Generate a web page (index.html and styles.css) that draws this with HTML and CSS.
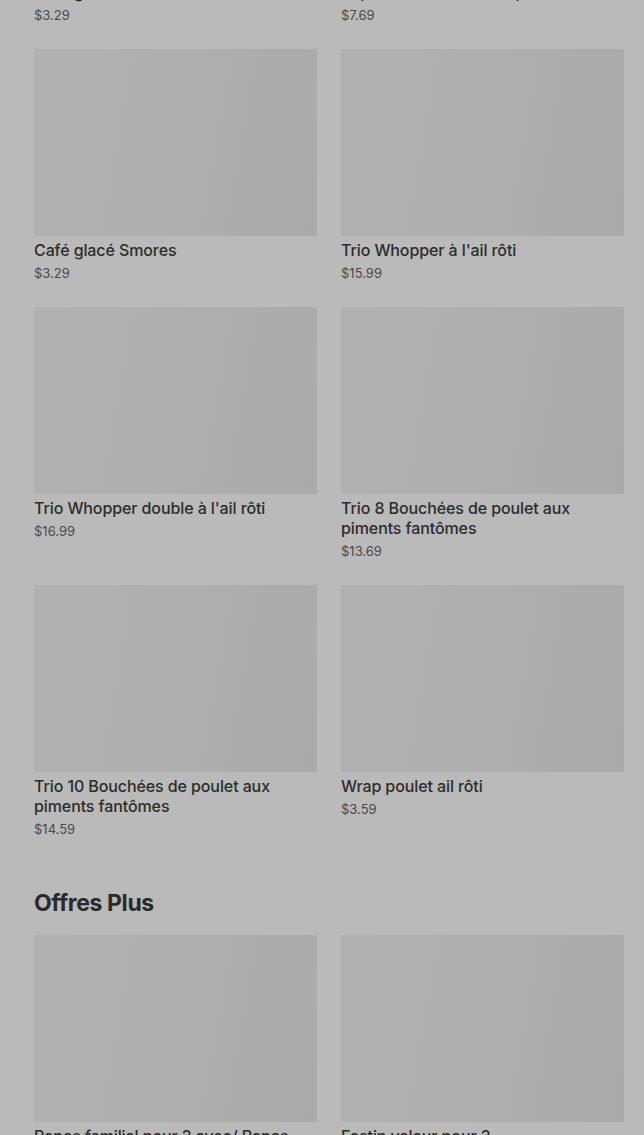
FILE: index.html
```html
<!DOCTYPE html>
<html lang="fr">
<head>
<meta charset="utf-8">
<link rel="stylesheet" href="styles.css">
</head>
<body>
<main class="page">
  <section class="section">
    <div class="grid">
      <div class="card"><div class="thumb"></div><div class="title">Café glacé Mocha</div><div class="price">$3.29</div></div>
      <div class="card"><div class="thumb"></div><div class="title">Repas 10 Bouchées de poulet</div><div class="price">$7.69</div></div>
      <div class="card"><div class="thumb"></div><div class="title">Café glacé Smores</div><div class="price">$3.29</div></div>
      <div class="card"><div class="thumb"></div><div class="title">Trio Whopper à l'ail rôti</div><div class="price">$15.99</div></div>
      <div class="card"><div class="thumb"></div><div class="title">Trio Whopper double à l'ail rôti</div><div class="price">$16.99</div></div>
      <div class="card"><div class="thumb"></div><div class="title">Trio 8 Bouchées de poulet aux piments fantômes</div><div class="price">$13.69</div></div>
      <div class="card"><div class="thumb"></div><div class="title">Trio 10 Bouchées de poulet aux piments fantômes</div><div class="price">$14.59</div></div>
      <div class="card"><div class="thumb"></div><div class="title">Wrap poulet ail rôti</div><div class="price">$3.59</div></div>
    </div>
  </section>
  <section class="section">
    <h2 class="heading">Offres Plus</h2>
    <div class="grid">
      <div class="card"><div class="thumb"></div><div class="title">Repas familial pour 2 avec/ Repas familial</div><div class="price">$24.99</div></div>
      <div class="card"><div class="thumb"></div><div class="title">Festin valeur pour 2</div><div class="price">$19.99</div></div>
    </div>
  </section>
</main>
</body>
</html>
```
FILE: styles.css
```css
html, body {
  margin: 0;
  padding: 0;
  background: #bababa;
  overflow: hidden;
}
body {
  font-family: Inter, "Liberation Sans", sans-serif;
  color: #2c2c2c;
}
.page {
  margin-top: -209px;
  padding: 0 20px 0 34px;
}
.grid {
  display: grid;
  grid-template-columns: 283px 283px;
  column-gap: 24px;
  row-gap: 24px;
}
.card {
  display: flex;
  flex-direction: column;
}
.thumb {
  height: 187px;
  background: linear-gradient(100deg, #b1b1b1 0%, #afafaf 45%, #aaaaaa 100%);
  margin-bottom: 4px;
}
.title {
  font-size: 16px;
  line-height: 20px;
  font-weight: 500;
  letter-spacing: -0.1px;
  color: #2c2c2c;
}
.price {
  margin-top: 3px;
  font-size: 13px;
  line-height: 20px;
  color: #4a4a4a;
}
.section + .section {
  margin-top: 50px;
}
.heading {
  margin: 0 0 18px;
  font-size: 23px;
  line-height: 28px;
  font-weight: 700;
  letter-spacing: -0.4px;
  color: #2a2a2a;
}
```
